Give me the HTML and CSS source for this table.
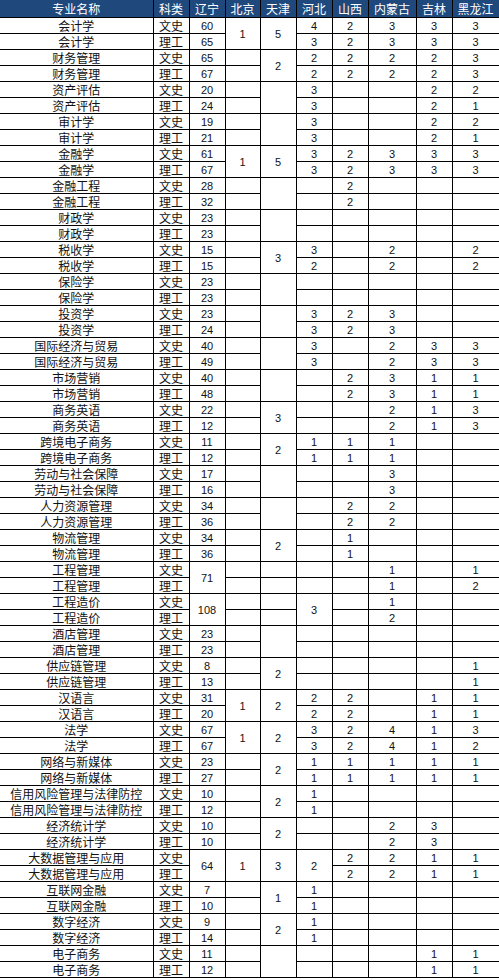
FILE: index.html
```html
<!DOCTYPE html>
<html lang="zh-CN">
<head>
<meta charset="utf-8">
<title>招生计划</title>
<link rel="stylesheet" href="styles.css">
</head>
<body>
<table class="plan">
<colgroup>
<col class="c-name"><col class="c-kind"><col class="c-n"><col class="c-n2"><col class="c-n"><col class="c-n"><col class="c-n"><col class="c-w"><col class="c-n"><col class="c-w2">
</colgroup>
<thead>
<tr><th class="name">专业名称</th><th>科类</th><th>辽宁</th><th>北京</th><th>天津</th><th>河北</th><th>山西</th><th>内蒙古</th><th>吉林</th><th>黑龙江</th></tr>
</thead>
<tbody>
<tr><td class="name">会计学</td><td class="kind">文史</td><td>60</td><td rowspan="2">1</td><td rowspan="2">5</td><td>4</td><td>2</td><td>3</td><td>3</td><td>3</td></tr>
<tr><td class="name">会计学</td><td class="kind">理工</td><td>65</td><td>3</td><td>2</td><td>3</td><td>3</td><td>3</td></tr>
<tr><td class="name">财务管理</td><td class="kind">文史</td><td>65</td><td></td><td rowspan="2">2</td><td>2</td><td>2</td><td>2</td><td>2</td><td>3</td></tr>
<tr><td class="name">财务管理</td><td class="kind">理工</td><td>67</td><td></td><td>2</td><td>2</td><td>2</td><td>2</td><td>3</td></tr>
<tr><td class="name">资产评估</td><td class="kind">文史</td><td>20</td><td></td><td rowspan="2"></td><td>3</td><td></td><td></td><td>2</td><td>2</td></tr>
<tr><td class="name">资产评估</td><td class="kind">理工</td><td>24</td><td></td><td>3</td><td></td><td></td><td>2</td><td>1</td></tr>
<tr><td class="name">审计学</td><td class="kind">文史</td><td>19</td><td></td><td rowspan="2"></td><td>3</td><td></td><td></td><td>2</td><td>2</td></tr>
<tr><td class="name">审计学</td><td class="kind">理工</td><td>21</td><td></td><td>3</td><td></td><td></td><td>2</td><td>1</td></tr>
<tr><td class="name">金融学</td><td class="kind">文史</td><td>61</td><td rowspan="2">1</td><td rowspan="2">5</td><td>3</td><td>2</td><td>3</td><td>3</td><td>3</td></tr>
<tr><td class="name">金融学</td><td class="kind">理工</td><td>67</td><td>3</td><td>2</td><td>3</td><td>3</td><td>3</td></tr>
<tr><td class="name">金融工程</td><td class="kind">文史</td><td>28</td><td></td><td rowspan="2"></td><td></td><td>2</td><td></td><td></td><td></td></tr>
<tr><td class="name">金融工程</td><td class="kind">理工</td><td>32</td><td></td><td></td><td>2</td><td></td><td></td><td></td></tr>
<tr><td class="name">财政学</td><td class="kind">文史</td><td>23</td><td></td><td rowspan="2"></td><td></td><td></td><td></td><td></td><td></td></tr>
<tr><td class="name">财政学</td><td class="kind">理工</td><td>23</td><td></td><td></td><td></td><td></td><td></td><td></td></tr>
<tr><td class="name">税收学</td><td class="kind">文史</td><td>15</td><td></td><td rowspan="2">3</td><td>3</td><td></td><td>2</td><td></td><td>2</td></tr>
<tr><td class="name">税收学</td><td class="kind">理工</td><td>15</td><td></td><td>2</td><td></td><td>2</td><td></td><td>2</td></tr>
<tr><td class="name">保险学</td><td class="kind">文史</td><td>23</td><td></td><td rowspan="2"></td><td></td><td></td><td></td><td></td><td></td></tr>
<tr><td class="name">保险学</td><td class="kind">理工</td><td>23</td><td></td><td></td><td></td><td></td><td></td><td></td></tr>
<tr><td class="name">投资学</td><td class="kind">文史</td><td>23</td><td></td><td rowspan="2"></td><td>3</td><td>2</td><td>3</td><td></td><td></td></tr>
<tr><td class="name">投资学</td><td class="kind">理工</td><td>24</td><td></td><td>3</td><td>2</td><td>3</td><td></td><td></td></tr>
<tr><td class="name">国际经济与贸易</td><td class="kind">文史</td><td>40</td><td></td><td rowspan="2"></td><td>3</td><td></td><td>2</td><td>3</td><td>3</td></tr>
<tr><td class="name">国际经济与贸易</td><td class="kind">理工</td><td>49</td><td></td><td>3</td><td></td><td>2</td><td>3</td><td>3</td></tr>
<tr><td class="name">市场营销</td><td class="kind">文史</td><td>40</td><td></td><td rowspan="2"></td><td></td><td>2</td><td>3</td><td>1</td><td>1</td></tr>
<tr><td class="name">市场营销</td><td class="kind">理工</td><td>48</td><td></td><td></td><td>2</td><td>3</td><td>1</td><td>1</td></tr>
<tr><td class="name">商务英语</td><td class="kind">文史</td><td>22</td><td></td><td rowspan="2">3</td><td></td><td></td><td>2</td><td>1</td><td>3</td></tr>
<tr><td class="name">商务英语</td><td class="kind">理工</td><td>12</td><td></td><td></td><td></td><td>2</td><td>1</td><td>3</td></tr>
<tr><td class="name">跨境电子商务</td><td class="kind">文史</td><td>11</td><td></td><td rowspan="2">2</td><td>1</td><td>1</td><td>1</td><td></td><td></td></tr>
<tr><td class="name">跨境电子商务</td><td class="kind">理工</td><td>12</td><td></td><td>1</td><td>1</td><td>1</td><td></td><td></td></tr>
<tr><td class="name">劳动与社会保障</td><td class="kind">文史</td><td>17</td><td></td><td rowspan="2"></td><td></td><td></td><td>3</td><td></td><td></td></tr>
<tr><td class="name">劳动与社会保障</td><td class="kind">理工</td><td>16</td><td></td><td></td><td></td><td>3</td><td></td><td></td></tr>
<tr><td class="name">人力资源管理</td><td class="kind">文史</td><td>34</td><td></td><td rowspan="2"></td><td></td><td>2</td><td>2</td><td></td><td></td></tr>
<tr><td class="name">人力资源管理</td><td class="kind">理工</td><td>36</td><td></td><td></td><td>2</td><td>2</td><td></td><td></td></tr>
<tr><td class="name">物流管理</td><td class="kind">文史</td><td>34</td><td></td><td rowspan="2">2</td><td></td><td>1</td><td></td><td></td><td></td></tr>
<tr><td class="name">物流管理</td><td class="kind">理工</td><td>36</td><td></td><td></td><td>1</td><td></td><td></td><td></td></tr>
<tr><td class="name">工程管理</td><td class="kind">文史</td><td rowspan="2">71</td><td></td><td></td><td></td><td></td><td>1</td><td></td><td>1</td></tr>
<tr><td class="name">工程管理</td><td class="kind">理工</td><td></td><td></td><td></td><td></td><td>1</td><td></td><td>2</td></tr>
<tr><td class="name">工程造价</td><td class="kind">文史</td><td rowspan="2">108</td><td></td><td></td><td rowspan="2">3</td><td></td><td>1</td><td></td><td></td></tr>
<tr><td class="name">工程造价</td><td class="kind">理工</td><td></td><td></td><td></td><td>2</td><td></td><td></td></tr>
<tr><td class="name">酒店管理</td><td class="kind">文史</td><td>23</td><td></td><td rowspan="2"></td><td></td><td></td><td></td><td></td><td></td></tr>
<tr><td class="name">酒店管理</td><td class="kind">理工</td><td>23</td><td></td><td></td><td></td><td></td><td></td><td></td></tr>
<tr><td class="name">供应链管理</td><td class="kind">文史</td><td>8</td><td></td><td rowspan="2">2</td><td></td><td></td><td></td><td></td><td>1</td></tr>
<tr><td class="name">供应链管理</td><td class="kind">理工</td><td>13</td><td></td><td></td><td></td><td></td><td></td><td>1</td></tr>
<tr><td class="name">汉语言</td><td class="kind">文史</td><td>31</td><td rowspan="2">1</td><td rowspan="2">2</td><td>2</td><td>2</td><td></td><td>1</td><td>1</td></tr>
<tr><td class="name">汉语言</td><td class="kind">理工</td><td>20</td><td>2</td><td>2</td><td></td><td>1</td><td>1</td></tr>
<tr><td class="name">法学</td><td class="kind">文史</td><td>67</td><td rowspan="2">1</td><td rowspan="2">2</td><td>3</td><td>2</td><td>4</td><td>1</td><td>3</td></tr>
<tr><td class="name">法学</td><td class="kind">理工</td><td>67</td><td>3</td><td>2</td><td>4</td><td>1</td><td>2</td></tr>
<tr><td class="name">网络与新媒体</td><td class="kind">文史</td><td>23</td><td></td><td rowspan="2">2</td><td>1</td><td>1</td><td>1</td><td>1</td><td>1</td></tr>
<tr><td class="name">网络与新媒体</td><td class="kind">理工</td><td>27</td><td></td><td>1</td><td>1</td><td>1</td><td>1</td><td>1</td></tr>
<tr><td class="name">信用风险管理与法律防控</td><td class="kind">文史</td><td>10</td><td></td><td rowspan="2">2</td><td>1</td><td></td><td></td><td></td><td></td></tr>
<tr><td class="name">信用风险管理与法律防控</td><td class="kind">理工</td><td>12</td><td></td><td>1</td><td></td><td></td><td></td><td></td></tr>
<tr><td class="name">经济统计学</td><td class="kind">文史</td><td>10</td><td></td><td rowspan="2">2</td><td></td><td></td><td>2</td><td>3</td><td></td></tr>
<tr><td class="name">经济统计学</td><td class="kind">理工</td><td>10</td><td></td><td></td><td></td><td>2</td><td>3</td><td></td></tr>
<tr><td class="name">大数据管理与应用</td><td class="kind">文史</td><td rowspan="2">64</td><td rowspan="2">1</td><td rowspan="2">3</td><td rowspan="2">2</td><td>2</td><td>2</td><td>1</td><td>1</td></tr>
<tr><td class="name">大数据管理与应用</td><td class="kind">理工</td><td>2</td><td>2</td><td>1</td><td>1</td></tr>
<tr><td class="name">互联网金融</td><td class="kind">文史</td><td>7</td><td></td><td rowspan="2">1</td><td>1</td><td></td><td></td><td></td><td></td></tr>
<tr><td class="name">互联网金融</td><td class="kind">理工</td><td>10</td><td></td><td>1</td><td></td><td></td><td></td><td></td></tr>
<tr><td class="name">数字经济</td><td class="kind">文史</td><td>9</td><td></td><td rowspan="2">2</td><td>1</td><td></td><td></td><td></td><td></td></tr>
<tr><td class="name">数字经济</td><td class="kind">理工</td><td>14</td><td></td><td>1</td><td></td><td></td><td></td><td></td></tr>
<tr><td class="name">电子商务</td><td class="kind">文史</td><td>11</td><td></td><td rowspan="2"></td><td></td><td></td><td></td><td>1</td><td>1</td></tr>
<tr><td class="name">电子商务</td><td class="kind">理工</td><td>12</td><td></td><td></td><td></td><td></td><td>1</td><td>1</td></tr>
</tbody>
</table>
</body>
</html>
```

FILE: styles.css
```css
html, body {
  margin: 0;
  padding: 0;
  background: #ffffff;
}

.plan {
  border-collapse: collapse;
  table-layout: fixed;
  width: 499px;
  font-family: "Liberation Sans", "Noto Sans CJK SC", sans-serif;
  color: #111;
}

.c-name { width: 153px; }
.c-kind { width: 36px; }
.c-n { width: 36px; }
.c-n2 { width: 35px; }
.c-w { width: 48px; }
.c-w2 { width: 47px; }

.plan thead tr { height: 17px; }
.plan tbody tr { height: 16px; }

.plan th,
.plan td {
  border: 1px solid #000;
  padding: 1px 0 0;
  text-align: center;
  vertical-align: middle;
  white-space: nowrap;
  overflow: hidden;
  line-height: 14px;
  font-size: 11px;
}

.plan th {
  background: #1f497d;
  color: #ffffff;
  font-family: "Noto Sans CJK SC", sans-serif;
  font-size: 12px;
  font-weight: normal;
  border-top: none;
}

.plan .name {
  border-left: none;
  font-family: "Noto Sans CJK SC", sans-serif;
  font-size: 12px;
}

.plan .kind {
  font-family: "Noto Sans CJK SC", sans-serif;
  font-size: 12px;
}
```
